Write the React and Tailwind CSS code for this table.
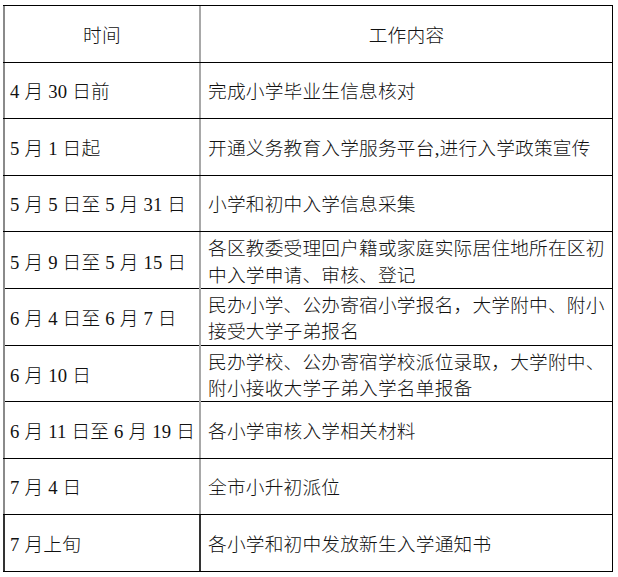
const rows = [
  ["4 月 30 日前", "完成小学毕业生信息核对"],
  ["5 月 1 日起", "开通义务教育入学服务平台,进行入学政策宣传"],
  ["5 月 5 日至 5 月 31 日", "小学和初中入学信息采集"],
  ["5 月 9 日至 5 月 15 日", "各区教委受理回户籍或家庭实际居住地所在区初中入学申请、审核、登记"],
  ["6 月 4 日至 6 月 7 日", "民办小学、公办寄宿小学报名，大学附中、附小接受大学子弟报名"],
  ["6 月 10 日", "民办学校、公办寄宿学校派位录取，大学附中、附小接收大学子弟入学名单报备"],
  ["6 月 11 日至 6 月 19 日", "各小学审核入学相关材料"],
  ["7 月 4 日", "全市小升初派位"],
  ["7 月上旬", "各小学和初中发放新生入学通知书"],
];

export default function App() {
  return (
    <div
      className="min-h-screen bg-white pt-[5px] pl-[3px] font-light text-[#111]"
      style={{ fontFamily: '"Liberation Serif", "Noto Sans CJK SC", serif' }}
    >
      <div className="w-[610px] border-t border-black text-[18.7px] tracking-[0.2px] leading-[26.5px]">
        <div className="grid h-[56.6px] grid-cols-[196px_414px] border-b border-black">
          <div className="flex items-center justify-center border-l-2 border-[#8a8a8a] pt-[4px]">
            时间
          </div>
          <div className="flex items-center justify-center border-l-2 border-r border-l-[#a8a8a8] border-r-black pt-[4px]">
            工作内容
          </div>
        </div>
        {rows.map(([time, task], i) => {
          const last = i === rows.length - 1;
          return (
            <div
              key={i}
              className="grid h-[56.6px] grid-cols-[196px_414px] border-b border-black"
            >
              <div
                className={
                  last
                    ? "flex items-center border-l-2 border-[#333] pl-[5px] pt-[4px]"
                    : "flex items-center border-l-2 border-[#8a8a8a] pl-[5px] pt-[4px]"
                }
              >
                {time}
              </div>
              <div
                className={
                  last
                    ? "flex items-center border-l-2 border-r border-l-[#333] border-r-black pl-[7px] pr-[3px] pt-[4px]"
                    : "flex items-center border-l-2 border-r border-l-[#a8a8a8] border-r-black pl-[7px] pr-[3px] pt-[4px]"
                }
              >
                {task}
              </div>
            </div>
          );
        })}
      </div>
    </div>
  );
}
